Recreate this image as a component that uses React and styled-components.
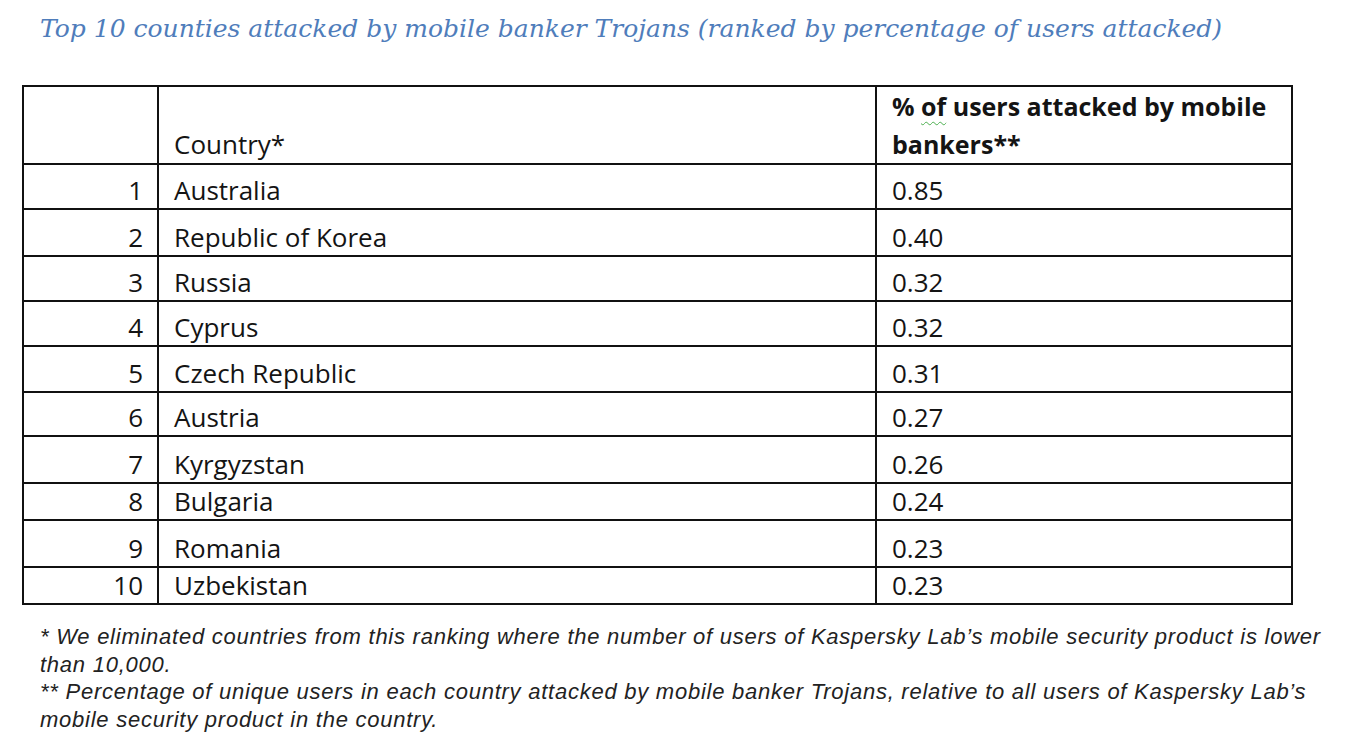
import React from 'react';
import styled, { createGlobalStyle } from 'styled-components';

const GlobalStyle = createGlobalStyle`
  body {
    margin: 0;
    background: #ffffff;
  }
`;

const Page = styled.div`
  width: 1346px;
  height: 750px;
  padding: 12px 0 0 22px;
  box-sizing: border-box;
  background: #ffffff;
`;

const Title = styled.h2`
  margin: 0 0 0 18px;
  font-family: "DejaVu Serif", serif;
  font-style: italic;
  font-weight: normal;
  font-size: 25px;
  line-height: 34px;
  color: #4f7dbb;
  white-space: nowrap;
`;

const Table = styled.table`
  margin-top: 39px;
  width: 1269px;
  border-collapse: collapse;
  table-layout: fixed;
  font-family: "Open Sans", "Liberation Sans", sans-serif;
  font-size: 26px;
  color: #141414;
  border: 2px solid #111;
`;

const Row = styled.tr`
  height: ${p => p.h}px;
`;

const Cell = styled.td`
  border: 2px solid #111;
  vertical-align: bottom;
  padding: 0 14px 4px 15px;
  text-align: ${p => (p.right ? 'right' : 'left')};
  line-height: 28px;
  white-space: nowrap;
`;

const HeadCell = styled(Cell)`
  font-weight: ${p => (p.bold ? 700 : 400)};
  font-size: ${p => (p.bold ? 25 : 26)}px;
  line-height: 38px;
  padding-bottom: 0;
  white-space: normal;
`;

const Squiggle = styled.span`
  text-decoration: underline wavy #4caf50;
  text-decoration-thickness: 1px;
  text-underline-offset: 5px;
`;

const Notes = styled.div`
  margin: 18px 0 0 18px;
  width: 1300px;
  font-family: "Liberation Sans", Arial, sans-serif;
  font-style: italic;
  font-size: 22px;
  letter-spacing: 0.75px;
  line-height: 27.5px;
  color: #222;
`;

const rows = [
  { n: 1, country: 'Australia', pct: '0.85', h: 45 },
  { n: 2, country: 'Republic of Korea', pct: '0.40', h: 47 },
  { n: 3, country: 'Russia', pct: '0.32', h: 45 },
  { n: 4, country: 'Cyprus', pct: '0.32', h: 45 },
  { n: 5, country: 'Czech Republic', pct: '0.31', h: 46 },
  { n: 6, country: 'Austria', pct: '0.27', h: 44 },
  { n: 7, country: 'Kyrgyzstan', pct: '0.26', h: 47 },
  { n: 8, country: 'Bulgaria', pct: '0.24', h: 37 },
  { n: 9, country: 'Romania', pct: '0.23', h: 47 },
  { n: 10, country: 'Uzbekistan', pct: '0.23', h: 37 },
];

export default function App() {
  return (
    <Page>
      <GlobalStyle />
      <Title>Top 10 counties attacked by mobile banker Trojans (ranked by percentage of users attacked)</Title>
      <Table>
        <colgroup>
          <col style={{ width: 135 }} />
          <col style={{ width: 718 }} />
          <col style={{ width: 416 }} />
        </colgroup>
        <tbody>
          <Row h={76}>
            <HeadCell></HeadCell>
            <HeadCell>Country*</HeadCell>
            <HeadCell bold>
              % <Squiggle>of</Squiggle> users attacked by mobile bankers**
            </HeadCell>
          </Row>
          {rows.map(r => (
            <Row key={r.n} h={r.h}>
              <Cell right>{r.n}</Cell>
              <Cell>{r.country}</Cell>
              <Cell>{r.pct}</Cell>
            </Row>
          ))}
        </tbody>
      </Table>
      <Notes>
        <div>* We eliminated countries from this ranking where the number of users of Kaspersky Lab’s mobile security product is lower than 10,000.</div>
        <div>** Percentage of unique users in each country attacked by mobile banker Trojans, relative to all users of Kaspersky Lab’s mobile security product in the country.</div>
      </Notes>
    </Page>
  );
}
